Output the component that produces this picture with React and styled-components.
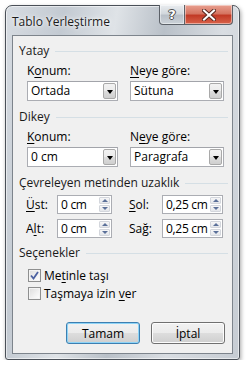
import React from "react";
import styled, { createGlobalStyle } from "styled-components";

const Global = createGlobalStyle`
  html, body { margin: 0; padding: 0; background: #ffffff; }
  body { font-family: "Open Sans", "Liberation Sans", Arial, sans-serif; font-size: 12px; color: #000; }
`;

const Page = styled.div`
  padding: 5px 0 0 5px;
`;

const Window = styled.div`
  width: 235px;
  height: 355px;
  box-sizing: border-box;
  border: 1px solid #4a5058;
  border-radius: 7px 7px 3px 3px;
  background: linear-gradient(100deg, #d7dce2 0%, #c3cad2 20%, #dfe3e7 38%, #b9c0c8 55%, #d9dde2 75%, #c6ccd3 100%);
  box-shadow: inset 0 0 0 1px rgba(255,255,255,0.55), 1px 2px 4px rgba(0,0,0,0.35);
  display: flex;
  flex-direction: column;
`;

const TitleBar = styled.div`
  height: 29px;
  display: flex;
  align-items: flex-start;
  padding-left: 6px;
`;

const Title = styled.div`
  margin-top: 7px;
  font-size: 12px;
  color: #1b1b1b;
  text-shadow: 0 0 6px rgba(255,255,255,0.9), 0 0 3px rgba(255,255,255,0.9);
`;

const Caption = styled.div`
  margin-left: auto;
  margin-right: 6px;
  display: flex;
  margin-top: -1px;
`;

const CapBtn = styled.div`
  width: ${p => p.$w}px;
  height: 20px;
  box-sizing: border-box;
  border: 1px solid #5c6168;
  border-top: none;
  display: flex;
  align-items: center;
  justify-content: center;
  font-family: "DejaVu Sans", sans-serif;
  font-weight: bold;
  color: #fff;
  ${p => p.$close
    ? `background: linear-gradient(#e9a090 0%, #d57562 45%, #c23a26 55%, #d8624a 100%);
       border-radius: 0 0 4px 0; border-left: none;`
    : `background: linear-gradient(#e9ecef 0%, #d3d8dd 45%, #b9c0c8 55%, #ccd2d8 100%);
       border-radius: 0 0 0 4px;`}
  box-shadow: inset 0 0 0 1px rgba(255,255,255,0.45);
`;

const HelpGlyph = styled.span`
  font-size: 13px;
  color: #fff;
  text-shadow: 0 0 1px #333, 1px 0 0 #555, -1px 0 0 #555, 0 1px 0 #555, 0 -1px 0 #555;
  margin-top: -1px;
`;

const Client = styled.div`
  margin: 0 6px 5px 6px;
  flex: 1;
  box-sizing: border-box;
  border: 1px solid #7d848c;
  background: #f0f0f0;
  padding: 8px 7px 0 6px;
  display: flex;
  flex-direction: column;
`;

const GroupHeader = styled.div`
  display: flex;
  align-items: center;
  height: 14px;
  line-height: 14px;
  margin-top: ${p => p.$mt || 0}px;
  color: #1a1a1a;
  white-space: nowrap;
  &::after {
    content: "";
    flex: 1;
    height: 1px;
    background: #d5dfe5;
    margin-left: 6px;
    margin-right: -3px;
  }
`;

const TwoCol = styled.div`
  display: grid;
  grid-template-columns: 91px 94px;
  column-gap: 12px;
  padding-left: 8px;
  margin-top: 6px;
`;

const Field = styled.div`
  display: flex;
  flex-direction: column;
`;

const Label = styled.div`
  height: 14px;
  line-height: 14px;
  margin-bottom: 3px;
  color: #000;
`;

const U = styled.span`
  text-decoration: underline;
  text-underline-offset: 2px;
`;

const Combo = styled.div`
  height: 20px;
  box-sizing: border-box;
  border: 1px solid #abadb3;
  border-top-color: #a2a4aa;
  background: #fff;
  display: flex;
  align-items: center;
  padding: 1px;
`;

const ComboText = styled.div`
  flex: 1;
  padding-left: 2px;
  line-height: 16px;
`;

const DropBtn = styled.div`
  width: 13px;
  height: 16px;
  box-sizing: border-box;
  border: 1px solid #a9a9a9;
  border-radius: 2px;
  background: linear-gradient(#f2f2f2 0%, #ebebeb 50%, #dddddd 51%, #cfcfcf 100%);
  display: flex;
  align-items: center;
  justify-content: center;
  &::after {
    content: "";
    border-left: 3.5px solid transparent;
    border-right: 3.5px solid transparent;
    border-top: 4px solid #000;
    margin-top: 1px;
  }
`;

const SpinGrid = styled.div`
  display: grid;
  grid-template-columns: 31px 55px 17px 33px 61px;
  row-gap: 5px;
  padding-left: 7px;
  margin-top: 5px;
  align-items: center;
`;

const SpinLabel = styled.div`
  grid-column: ${p => p.$second ? 4 : 1};
  line-height: 14px;
`;

const Spin = styled.div`
  grid-column: ${p => p.$second ? 5 : 2};
  height: 19px;
  box-sizing: border-box;
  border: 1px solid #abadb3;
  background: #fff;
  display: flex;
  align-items: stretch;
  padding: 1px;
`;

const SpinText = styled.div`
  flex: 1;
  padding-left: 2px;
  line-height: 15px;
  white-space: nowrap;
  overflow: hidden;
  letter-spacing: -0.3px;
`;

const SpinBtns = styled.div`
  width: 11px;
  display: flex;
  flex-direction: column;
  gap: 1px;
`;

const SpinBtn = styled.div`
  flex: 1;
  box-sizing: border-box;
  border: 1px solid #d3d6dc;
  border-radius: 1px;
  background: linear-gradient(#f6f6f7, #e4e6ea);
  display: flex;
  align-items: center;
  justify-content: center;
  &::after {
    content: "";
    border-left: 3px solid transparent;
    border-right: 3px solid transparent;
    ${p => p.$down ? "border-top: 3px solid #5b7099;" : "border-bottom: 3px solid #5b7099;"}
  }
`;

const CheckList = styled.div`
  display: flex;
  flex-direction: column;
  gap: 5px;
  padding-left: 9px;
  margin-top: 9px;
`;

const CheckRow = styled.div`
  display: flex;
  align-items: center;
  gap: 3px;
  height: 13px;
`;

const CheckText = styled.span`
  line-height: 14px;
`;

const Box = styled.div`
  width: 13px;
  height: 13px;
  box-sizing: border-box;
  border: 1px solid #8e8f8f;
  background: linear-gradient(135deg, #dcdcdc 0%, #f2f2f2 60%, #ffffff 100%);
  box-shadow: inset 0 0 0 1px #f4f4f4;
  display: flex;
  align-items: center;
  justify-content: center;
`;

const Buttons = styled.div`
  margin-top: auto;
  margin-bottom: 9px;
  display: flex;
  justify-content: flex-end;
  gap: 11px;
`;

const Button = styled.div`
  width: 74px;
  height: 22px;
  box-sizing: border-box;
  border: 1px solid ${p => p.$def ? "#3c7fb1" : "#707070"};
  border-radius: 3px;
  background: linear-gradient(#f2f2f2 0%, #ebebeb 50%, #dddddd 51%, #cfcfcf 100%);
  box-shadow: inset 0 0 0 1px ${p => p.$def ? "#8ed4f7" : "#fcfcfc"};
  display: flex;
  align-items: center;
  justify-content: center;
`;

const Check = () => (
  <svg width="9" height="9" viewBox="0 0 9 9">
    <path d="M1 4.5 L3.5 7.5 L8 1" fill="none" stroke="#4c61a1" strokeWidth="1.8" />
  </svg>
);

const CloseX = () => (
  <svg width="14" height="12" viewBox="0 0 14 12">
    <path d="M2 1.5 L12 10.5 M12 1.5 L2 10.5" stroke="#5a2a22" strokeWidth="4" strokeLinecap="square" />
    <path d="M2 1.5 L12 10.5 M12 1.5 L2 10.5" stroke="#ffffff" strokeWidth="2" strokeLinecap="square" />
  </svg>
);

const ComboField = ({ label, value }) => (
  <Field>
    <Label>{label}</Label>
    <Combo>
      <ComboText>{value}</ComboText>
      <DropBtn />
    </Combo>
  </Field>
);

const SpinField = ({ value, second }) => (
  <Spin $second={second}>
    <SpinText>{value}</SpinText>
    <SpinBtns>
      <SpinBtn />
      <SpinBtn $down />
    </SpinBtns>
  </Spin>
);

export default function App() {
  return (
    <>
      <Global />
      <Page>
        <Window>
          <TitleBar>
            <Title>Tablo Yerleştirme</Title>
            <Caption>
              <CapBtn $w={26}><HelpGlyph>?</HelpGlyph></CapBtn>
              <CapBtn $w={48} $close><CloseX /></CapBtn>
            </Caption>
          </TitleBar>
          <Client>
            <GroupHeader>Yatay</GroupHeader>
            <TwoCol>
              <ComboField label={<>K<U>o</U>num:</>} value="Ortada" />
              <ComboField label={<><U>N</U>eye göre:</>} value="Sütuna" />
            </TwoCol>
            <GroupHeader $mt={9}>Dikey</GroupHeader>
            <TwoCol>
              <ComboField label={<><U>K</U>onum:</>} value="0 cm" />
              <ComboField label={<>N<U>e</U>ye göre:</>} value="Paragrafa" />
            </TwoCol>
            <GroupHeader $mt={9}>Çevreleyen metinden uzaklık</GroupHeader>
            <SpinGrid>
              <SpinLabel><U>Ü</U>st:</SpinLabel>
              <SpinField value="0 cm" />
              <SpinLabel $second><U>S</U>ol:</SpinLabel>
              <SpinField value="0,25 cm" second />
              <SpinLabel>A<U>l</U>t:</SpinLabel>
              <SpinField value="0 cm" />
              <SpinLabel $second>Sa<U>ğ</U>:</SpinLabel>
              <SpinField value="0,25 cm" second />
            </SpinGrid>
            <GroupHeader $mt={8}>Seçenekler</GroupHeader>
            <CheckList>
              <CheckRow><Box><Check /></Box><CheckText>Me<U>t</U>inle taşı</CheckText></CheckRow>
              <CheckRow><Box /><CheckText>Taşmaya izin <U>v</U>er</CheckText></CheckRow>
            </CheckList>
            <Buttons>
              <Button $def>Tamam</Button>
              <Button>İptal</Button>
            </Buttons>
          </Client>
        </Window>
      </Page>
    </>
  );
}
